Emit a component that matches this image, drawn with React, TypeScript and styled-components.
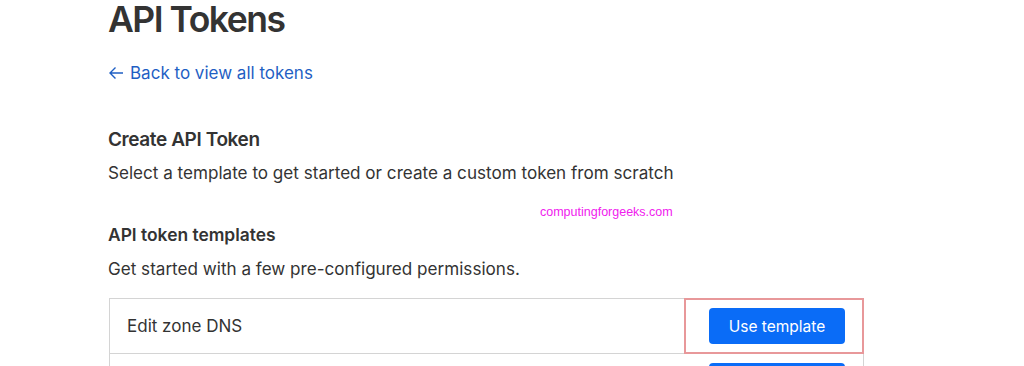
import React from "react";
import styled, { createGlobalStyle } from "styled-components";

const Global = createGlobalStyle`
  html, body { margin: 0; padding: 0; background: #ffffff; }
  body { font-family: "Inter", "Liberation Sans", Arial, sans-serif; color: #333333; overflow: hidden; }
`;

const Page = styled.main`
  width: 1024px;
  height: 366px;
  padding: 0 0 0 108px;
  box-sizing: border-box;
  display: flex;
  flex-direction: column;
  align-items: flex-start;
`;

const Title = styled.h1`
  margin: 0;
  margin-top: -2px;
  font-size: 35.5px;
  line-height: 44px;
  font-weight: 600;
  color: #333333;
  letter-spacing: -1.5px;
`;

const BackLink = styled.a`
  margin-top: 20px;
  font-size: 17px;
  line-height: 22px;
  color: #1f5fc4;
  text-decoration: none;
  display: flex;
  align-items: center;
  gap: 6px;
`;

const SectionTitle = styled.h2`
  margin: 43px 0 0;
  font-size: 19px;
  line-height: 26px;
  font-weight: 600;
  color: #333333;
  letter-spacing: -0.4px;
`;

const Text = styled.p<{ $top: number }>`
  margin: ${(p) => p.$top}px 0 0;
  font-size: 17.1px;
  line-height: 22px;
  color: #333333;
`;

const Watermark = styled.div`
  margin: 21px 0 0 432px;
  font-family: "Liberation Sans", Arial, sans-serif;
  font-size: 12.5px;
  line-height: 14px;
  color: #f020ee;
`;

const SubTitle = styled.h3`
  margin: 5px 0 0;
  font-size: 17.4px;
  line-height: 22px;
  font-weight: 600;
  color: #333333;
`;

const Table = styled.div`
  margin-top: 18px;
  margin-left: 1px;
  width: 753px;
  border: 1px solid #d4d4d4;
  border-bottom: none;
  display: flex;
  flex-direction: column;
`;

const Row = styled.div`
  position: relative;
  height: 54px;
  display: flex;
  align-items: center;
  justify-content: space-between;
  padding: 0 18px 0 17px;
  border-bottom: 1px solid #d4d4d4;
`;

const RowLabel = styled.span`
  font-size: 17px;
  color: #333333;
`;

const Button = styled.button`
  width: 136px;
  height: 36px;
  border: none;
  border-radius: 4px;
  background: #0a6cf7;
  color: #ffffff;
  font-family: inherit;
  font-size: 15.5px;
  cursor: pointer;
`;

const Highlight = styled.div`
  position: absolute;
  left: 574px;
  top: -1px;
  width: 176px;
  height: 52px;
  border: 2px solid #e8989a;
  pointer-events: none;
`;

export default function App() {
  return (
    <>
      <Global />
      <Page>
        <Title>API Tokens</Title>
        <BackLink href="#">
          <svg width="16" height="14" viewBox="0 0 16 14" fill="none" stroke="#1f5fc4" strokeWidth="1.4">
            <path d="M15 7H2M7.5 1.5L2 7l5.5 5.5" />
          </svg>
          Back to view all tokens
        </BackLink>
        <SectionTitle>Create API Token</SectionTitle>
        <Text $top={9}>Select a template to get started or create a custom token from scratch</Text>
        <Watermark>computingforgeeks.com</Watermark>
        <SubTitle>API token templates</SubTitle>
        <Text $top={12}>Get started with a few pre-configured permissions.</Text>
        <Table>
          <Row>
            <RowLabel>Edit zone DNS</RowLabel>
            <Button>Use template</Button>
            <Highlight />
          </Row>
          <Row>
            <RowLabel>Read all resources</RowLabel>
            <Button>Use template</Button>
          </Row>
        </Table>
      </Page>
    </>
  );
}
